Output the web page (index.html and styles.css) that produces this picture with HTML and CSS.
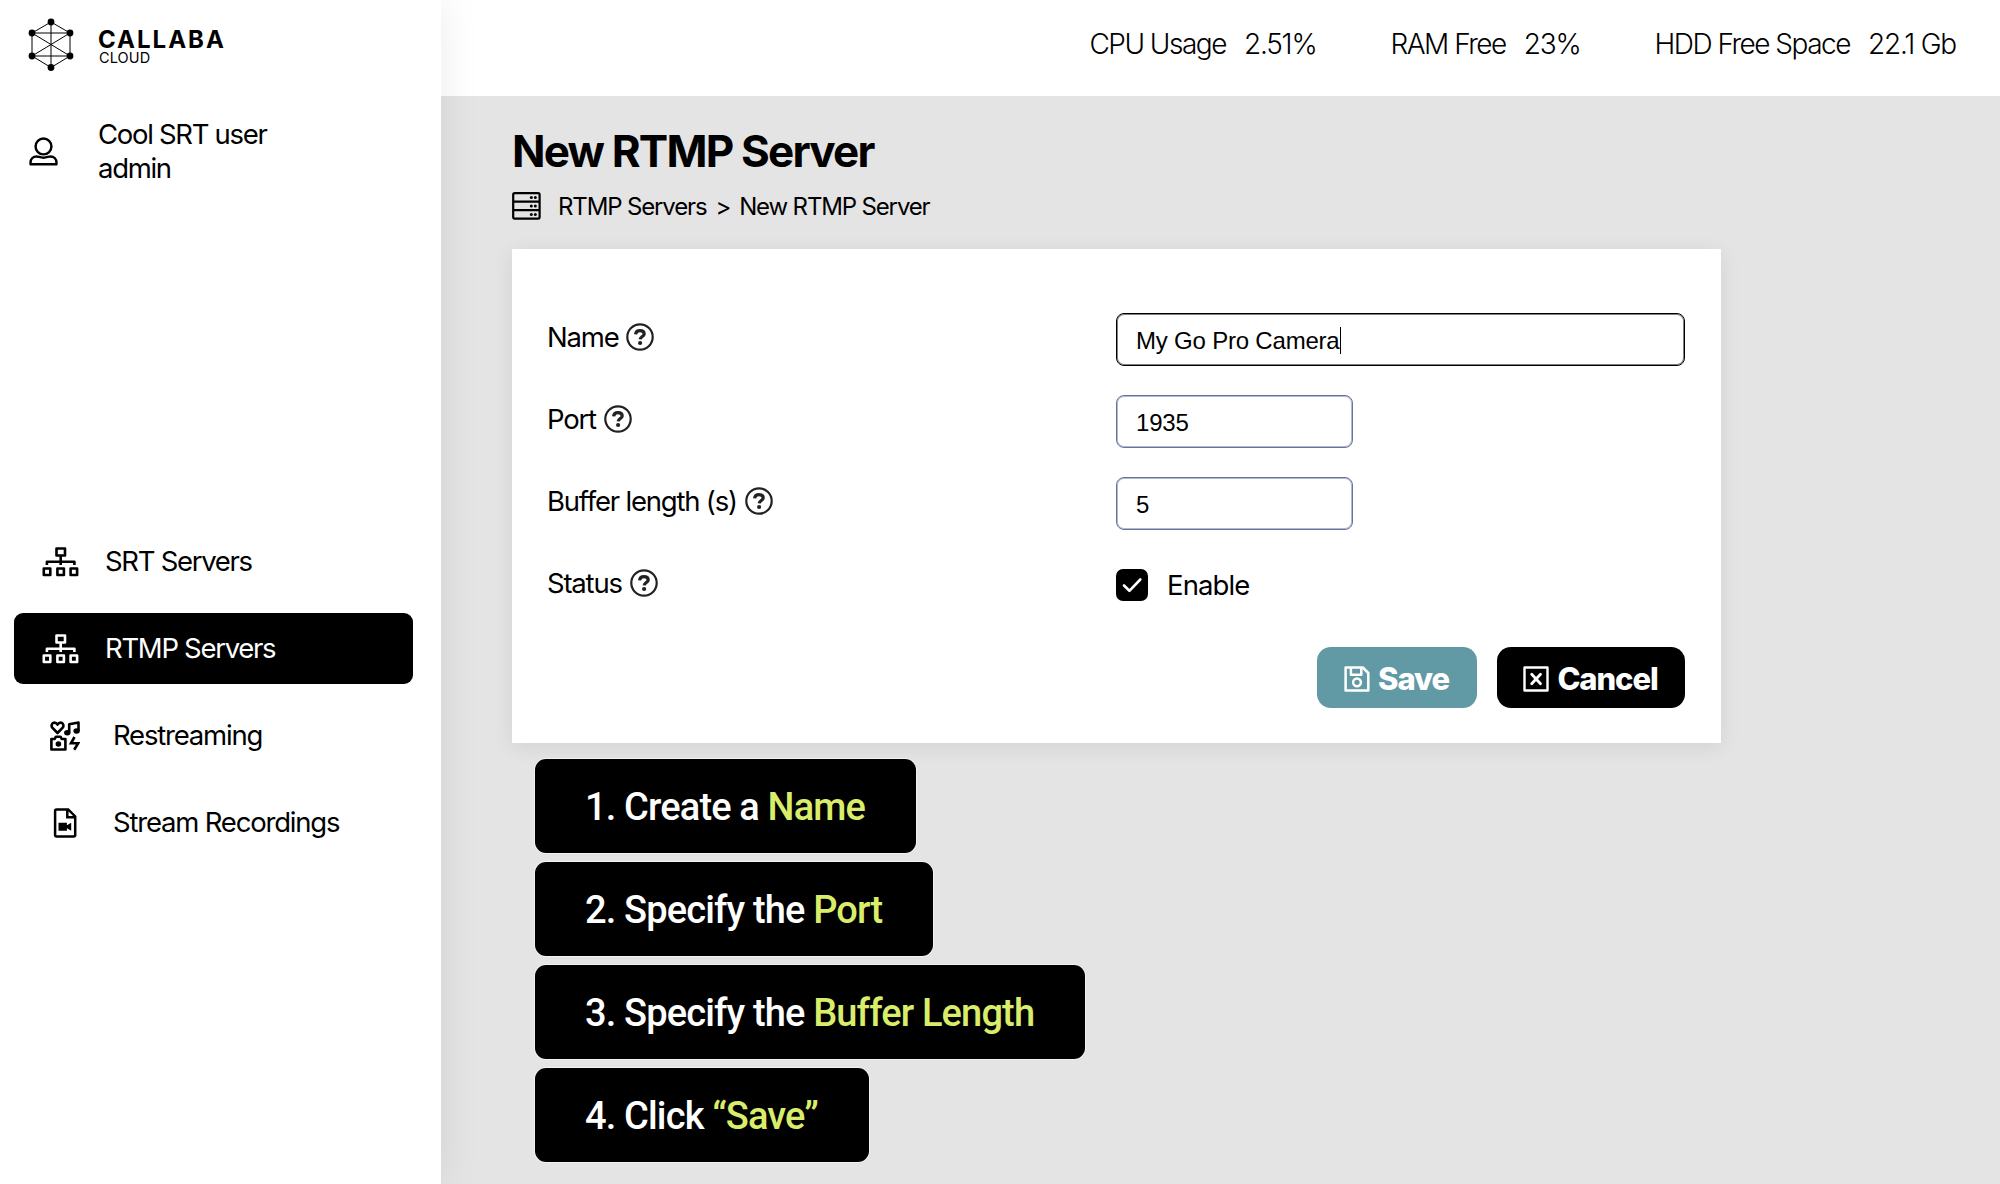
FILE: index.html
```
<!DOCTYPE html>
<html lang="en">
<head>
    <meta charset="UTF-8">
    <meta name="viewport" content="width=device-width, initial-scale=1.0">
    <title>New RTMP Server - Callaba Cloud</title>
    <link rel="stylesheet" href="styles.css">
</head>
<body>
    <!-- Shared icons -->
    <svg class="sprite">
        <symbol id="icon-help" viewBox="0 0 28 28">
            <circle cx="14" cy="14" r="12.7" fill="none" stroke="currentColor" stroke-width="2.2"/>
            <path d="M9.6 11.400c.2-2.300 1.900-3.700 4.400-3.700s4.200 1.300 4.200 3.200c0 2.500-3.800 2.700-4 5.400" fill="none" stroke="currentColor" stroke-width="3.200"/>
            <circle cx="14.100" cy="20" r="2.100" fill="currentColor"/>
        </symbol>
        <symbol id="icon-sitemap" viewBox="0 0 38 30">
            <g fill="none" stroke="currentColor" stroke-width="2.600" stroke-linejoin="round">
                <rect x="14.500" y="1.500" width="8.500" height="7"/>
                <rect x="1.800" y="21.500" width="6.500" height="6.500"/>
                <rect x="15.400" y="21.500" width="6.500" height="6.500"/>
                <rect x="28.600" y="21.500" width="6.500" height="6.500"/>
                <path d="M18.700 9v9M4.900 18v-3.200h27.500V18"/>
            </g>
        </symbol>
    </svg>

    <div class="app">
        <aside class="sidebar">
            <div class="logo">
                <svg class="logo-mark" viewBox="0 0 46 54">
                    <g fill="none" stroke="#000" stroke-width="1">
                        <path d="M23 4L42 15v23L23 49.500 4 38V15z"/>
                        <path d="M4 15h38M4 38h38M23 4v45M4 15l38 23M42 15L4 38"/>
                    </g>
                    <circle cx="23" cy="4" r="3.400"/>
                    <circle cx="42" cy="15" r="3.400"/>
                    <circle cx="42" cy="38" r="3.400"/>
                    <circle cx="23" cy="49.500" r="3.400"/>
                    <circle cx="4" cy="38" r="3.400"/>
                    <circle cx="4" cy="15" r="3.400"/>
                </svg>
                <div class="logo-text">
                    <div class="logo-name">CALLABA</div>
                    <div class="logo-sub">CLOUD</div>
                </div>
            </div>

            <div class="user">
                <svg class="user-icon" viewBox="0 0 30 30">
                    <g fill="none" stroke="#000" stroke-width="2.500" stroke-linejoin="round">
                        <circle cx="15" cy="9.800" r="8.200"/>
                        <path d="M1.600 28.200v-1.700c0-3.900 2.700-6.400 6.300-6.400 2.200 0 3.400 1.300 7.100 1.300s4.900-1.300 7.100-1.300c3.600 0 6.300 2.500 6.300 6.400v1.700z"/>
                    </g>
                </svg>
                <div class="user-info">
                    <div>Cool SRT user</div>
                    <div>admin</div>
                </div>
            </div>

            <nav class="menu">
                <a class="menu-item">
                    <svg class="icon-sitemap"><use href="#icon-sitemap"/></svg>
                    <span>SRT Servers</span>
                </a>
                <a class="menu-item active">
                    <svg class="icon-sitemap"><use href="#icon-sitemap"/></svg>
                    <span>RTMP Servers</span>
                </a>
                <a class="menu-item sub">
                    <svg class="icon-media" viewBox="0 0 30 30">
                        <g fill="none" stroke="#000" stroke-width="2.600" stroke-linejoin="round">
                            <path d="M7.500 12L2.300 6.600C.8 4.600 1.900 1.600 4.300 1.600c1.500 0 2.500.8 3.200 2 .7-1.200 1.700-2 3.200-2 2.400 0 3.500 3 2 5z"/>
                            <path d="M19.200 11.500V3.200l9.300-1.700v8.600"/>
                            <path d="M1.400 18h3.300l1.200-2.300h4.600l1.200 2.300h3.700v10.500H1.400z"/>
                        </g>
                        <ellipse cx="17.300" cy="11.700" rx="3.200" ry="2.700"/>
                        <ellipse cx="26.600" cy="10" rx="3.200" ry="2.700"/>
                        <circle cx="8.400" cy="23" r="2.800"/>
                        <path d="M24.500 16l-3.500 6.300h7.200l-4 6.500" fill="none" stroke="#000" stroke-width="2.600"/>
                    </svg>
                    <span>Restreaming</span>
                </a>
                <a class="menu-item sub">
                    <svg class="icon-record" viewBox="0 0 30 30">
                        <path d="M6.500 1.400h11.700l7 7v18.800a1.400 1.400 0 0 1-1.400 1.400H6.500a1.400 1.400 0 0 1-1.400-1.400V2.800a1.400 1.400 0 0 1 1.400-1.400zM17.300 1.800v7.400h7.500" fill="none" stroke="#000" stroke-width="2.500"/>
                        <path d="M8.500 14.800h8.400v2.500l4.300-2.500v8l-4.300-2.500v2.500H8.500z"/>
                    </svg>
                    <span>Stream Recordings</span>
                </a>
            </nav>
        </aside>

        <div class="main">
            <header class="topbar">
                <div class="stat"><span>CPU Usage</span><span class="stat-value">2.51%</span></div>
                <div class="stat"><span>RAM Free</span><span class="stat-value">23%</span></div>
                <div class="stat"><span>HDD Free Space</span><span class="stat-value">22.1 Gb</span></div>
            </header>

            <main class="content">
                <h1>New RTMP Server</h1>
                <div class="breadcrumb">
                    <svg class="icon-rack" viewBox="0 0 29 28">
                        <g fill="none" stroke="#000" stroke-width="2.200">
                            <rect x="1.200" y="1.200" width="26.400" height="25.400" rx="1.500"/>
                            <path d="M1 9.700h27M1 18.200h27"/>
                        </g>
                        <g fill="#000">
                            <circle cx="19.300" cy="5.500" r="1.500"/><circle cx="23.300" cy="5.500" r="1.500"/>
                            <circle cx="19.300" cy="14" r="1.500"/><circle cx="23.300" cy="14" r="1.500"/>
                            <circle cx="19.300" cy="22.400" r="1.500"/><circle cx="23.300" cy="22.400" r="1.500"/>
                        </g>
                    </svg>
                    <span>RTMP Servers</span>
                    <span class="separator">&gt;</span>
                    <span>New RTMP Server</span>
                </div>

                <form class="card">
                    <div class="row">
                        <label for="name">Name <svg class="help"><use href="#icon-help"/></svg></label>
                        <div class="field field-wide focused" id="name">My Go Pro Camera<span class="caret"></span></div>
                    </div>
                    <div class="row">
                        <label for="port">Port <svg class="help"><use href="#icon-help"/></svg></label>
                        <input class="field" type="text" id="port" value="1935">
                    </div>
                    <div class="row">
                        <label for="buffer">Buffer length (s) <svg class="help"><use href="#icon-help"/></svg></label>
                        <input class="field" type="text" id="buffer" value="5">
                    </div>
                    <div class="row">
                        <label>Status <svg class="help"><use href="#icon-help"/></svg></label>
                        <div class="status">
                            <span class="checkbox">
                                <svg viewBox="0 0 32 32"><path d="M8 16.500l5.400 5.300L24.300 10.500" fill="none" stroke="#fff" stroke-width="2.600" stroke-linecap="round" stroke-linejoin="round"/></svg>
                            </span>
                            <span>Enable</span>
                        </div>
                    </div>
                    <div class="actions">
                        <button type="button" class="btn btn-save">
                            <svg viewBox="0 0 26 26">
                                <g fill="none" stroke="#fff" stroke-width="2.500" stroke-linejoin="round">
                                    <path d="M1.600 1.500h17.200l5.500 5.500v17.500H1.600z"/>
                                    <path d="M6.900 1.500v7.300h10.400V1.500"/>
                                    <circle cx="13" cy="16.300" r="3.900"/>
                                </g>
                            </svg>
                            <span>Save</span>
                        </button>
                        <button type="button" class="btn btn-cancel">
                            <svg viewBox="0 0 26 26">
                                <g fill="none" stroke="#fff" stroke-width="2.400" stroke-linejoin="round">
                                    <rect x="1.500" y="1.500" width="23" height="23"/>
                                    <path d="M8.700 8.300l8.800 9.400M17.500 8.300l-8.800 9.400" stroke-width="2.800" stroke-linecap="round"/>
                                </g>
                            </svg>
                            <span>Cancel</span>
                        </button>
                    </div>
                </form>

                <div class="steps">
                    <div class="step">1. Create a <em>Name</em></div>
                    <div class="step">2. Specify the <em>Port</em></div>
                    <div class="step">3. Specify the <em>Buffer Length</em></div>
                    <div class="step">4. Click <em>“Save”</em></div>
                </div>
            </main>
        </div>
    </div>
</body>
</html>
```
FILE: styles.css
```
* {
    box-sizing: border-box;
}

body {
    margin: 0;
    font-family: 'Inter', sans-serif;
    font-size: 27.5px;
    letter-spacing: -1.2px;
    color: #000;
    background-color: #e4e4e4;
}

.sprite {
    display: none;
}

.app {
    display: flex;
    height: 1184px;
    overflow: hidden;
}

/* Sidebar */
.sidebar {
    position: relative;
    z-index: 1;
    flex: 0 0 441px;
    background-color: #fff;
    box-shadow: 0 0 40px rgba(0, 0, 0, 0.08);
}

.logo {
    display: flex;
    padding: 18px 0 0 28px;
    height: 117px;
}

.logo-mark {
    width: 46px;
    height: 54px;
    margin-right: 24px;
}

.logo-text {
    padding-top: 9px;
}

.logo-name {
    font-size: 24px;
    font-weight: 700;
    line-height: 26px;
    letter-spacing: 2px;
}

.logo-sub {
    margin-left: 1px;
    font-size: 14.5px;
    font-weight: 400;
    line-height: 10px;
    letter-spacing: 0.1px;
}

.user {
    display: flex;
    align-items: center;
    height: 68px;
    padding-left: 29px;
}

.user-icon {
    width: 29px;
    height: 29px;
    margin-right: 40px;
}

.user-info {
    line-height: 34px;
    letter-spacing: -1.3px;
}

.menu {
    display: flex;
    flex-direction: column;
    gap: 16px;
    padding: 341px 28px 0 14px;
    letter-spacing: -1.3px;
}

.menu-item {
    display: flex;
    align-items: center;
    height: 71px;
    padding-left: 28px;
    border-radius: 9px;
}

.menu-item span {
    padding-bottom: 2px;
}

.menu-item.active {
    background-color: #000;
    color: #fff;
}

.menu-item.sub {
    padding-left: 36px;
    letter-spacing: -1.2px;
}

.icon-sitemap {
    width: 38px;
    height: 30px;
    margin-right: 25px;
}

.icon-media,
.icon-record {
    width: 30px;
    height: 30px;
    margin-right: 33px;
}

/* Main area */
.main {
    flex: 1;
}

.topbar {
    display: flex;
    justify-content: flex-end;
    gap: 74px;
    height: 96px;
    padding: 27px 44px 0 0;
    background-color: #fff;
    font-size: 28px;
    font-weight: 300;
    line-height: 34px;
    letter-spacing: -1.5px;
}

.stat {
    display: flex;
    gap: 18px;
}

.stat-value {
    letter-spacing: -1.2px;
}

.content {
    padding: 28px 71px 0;
}

h1 {
    margin: 0;
    font-size: 44px;
    font-weight: 700;
    line-height: 54px;
    letter-spacing: -1.8px;
}

.breadcrumb {
    display: flex;
    align-items: center;
    height: 30px;
    margin: 13px 0 28px;
    font-size: 24px;
    letter-spacing: -1.15px;
}

.icon-rack {
    width: 29px;
    height: 28px;
    margin-right: 17px;
}

.separator {
    margin: 0 9px;
}

.card {
    width: 1209px;
    height: 494px;
    padding: 64px 36px 0 35px;
    background-color: #fff;
    box-shadow: 0 4px 20px rgba(0, 0, 0, 0.08);
}

.row {
    display: grid;
    grid-template-columns: 569px 1fr;
    height: 82px;
}

label {
    display: flex;
    align-items: center;
    gap: 8px;
    height: 48px;
}

.help {
    width: 28px;
    height: 28px;
    color: #222;
}

.field {
    display: flex;
    align-items: center;
    width: 237px;
    height: 53px;
    padding: 2px 19px 0;
    border: 1px solid #66739a;
    border-radius: 8px;
    background-color: #fff;
    box-shadow: inset 0 0 0 1px rgba(102, 115, 154, 0.5);
    font-family: 'Liberation Sans', Arial, sans-serif;
    font-size: 24px;
    letter-spacing: -0.2px;
}

.field-wide {
    width: 569px;
}

.field.focused {
    border-color: #000;
    box-shadow: inset 0 0 0 1px rgba(0, 0, 0, 0.5);
}

.caret {
    width: 1px;
    height: 27px;
    background-color: #000;
}

.status {
    display: flex;
    align-items: center;
    gap: 19px;
    height: 47px;
    padding-top: 5px;
    letter-spacing: -0.9px;
}

.checkbox {
    width: 32px;
    height: 32px;
    border-radius: 7px;
    background-color: #000;
}

.checkbox svg {
    display: block;
}

.actions {
    display: flex;
    justify-content: flex-end;
    gap: 20px;
    padding-top: 6px;
}

.btn {
    display: flex;
    align-items: center;
    justify-content: center;
    gap: 8px;
    height: 61px;
    padding: 2px 1px 0 0;
    border: none;
    border-radius: 14px;
    color: #fff;
    font-family: 'Inter', sans-serif;
    font-size: 31px;
    font-weight: 800;
    letter-spacing: -1.1px;
}

.btn svg {
    width: 26px;
    height: 26px;
}

.btn-save {
    width: 160px;
    background-color: #6199a5;
}

.btn-cancel {
    width: 188px;
    background-color: #000;
}

/* Steps under the form */
.steps {
    display: flex;
    flex-direction: column;
    align-items: flex-start;
    gap: 9px;
    padding: 16px 0 0 23px;
}

.step {
    height: 94px;
    padding: 0 51px 0 50px;
    border-radius: 11px;
    background-color: #000;
    box-shadow: 0 0 0 1px #f2f2f2;
    color: #fff;
    font-family: 'Roboto', sans-serif;
    font-size: 38px;
    font-weight: 500;
    line-height: 97px;
    letter-spacing: -0.85px;
}

.step em {
    font-style: normal;
    color: #d9ed6b;
}
```
